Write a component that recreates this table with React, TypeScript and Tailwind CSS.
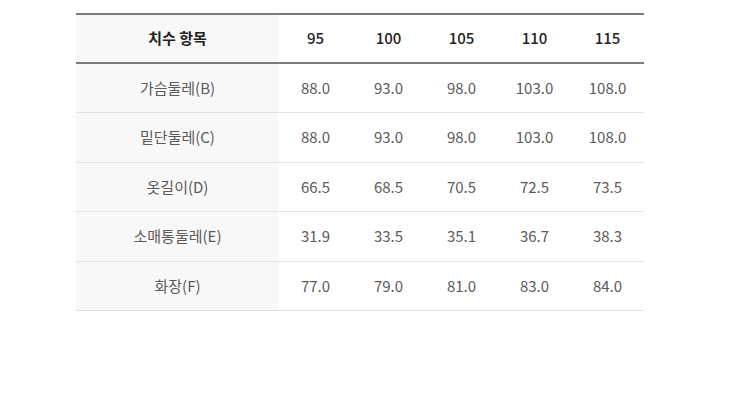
import React from "react";

const cols = ["95", "100", "105", "110", "115"];
const rows: [string, string[]][] = [
  ["가슴둘레(B)", ["88.0", "93.0", "98.0", "103.0", "108.0"]],
  ["밑단둘레(C)", ["88.0", "93.0", "98.0", "103.0", "108.0"]],
  ["옷길이(D)", ["66.5", "68.5", "70.5", "72.5", "73.5"]],
  ["소매통둘레(E)", ["31.9", "33.5", "35.1", "36.7", "38.3"]],
  ["화장(F)", ["77.0", "79.0", "81.0", "83.0", "84.0"]],
];

export default function App() {
  return (
    <div
      className="w-[750px] h-[404px] bg-white pt-[13px] pl-[76px]"
      style={{ fontFamily: '"Noto Sans CJK KR", "Noto Sans", sans-serif' }}
    >
      <div className="w-[568px] border-t-2 border-[#7a7a7a]">
        <div className="flex h-[49px] border-b-2 border-[#7a7a7a] text-[15px] text-[#222] font-medium">
          <div className="w-[203px] bg-[#f8f8f8] flex items-center justify-center font-bold">치수 항목</div>
          {cols.map((c) => (
            <div key={c} className="flex-1 flex items-center justify-center">
              {c}
            </div>
          ))}
        </div>
        {rows.map(([label, vals]) => (
          <div key={label} className="flex h-[49.4px] border-b border-[#e2e2e2] text-[15px] text-[#5a5a5a]">
            <div className="w-[203px] bg-[#f8f8f8] flex items-center justify-center">{label}</div>
            {vals.map((v, i) => (
              <div key={i} className="flex-1 flex items-center justify-center">
                {v}
              </div>
            ))}
          </div>
        ))}
      </div>
    </div>
  );
}
